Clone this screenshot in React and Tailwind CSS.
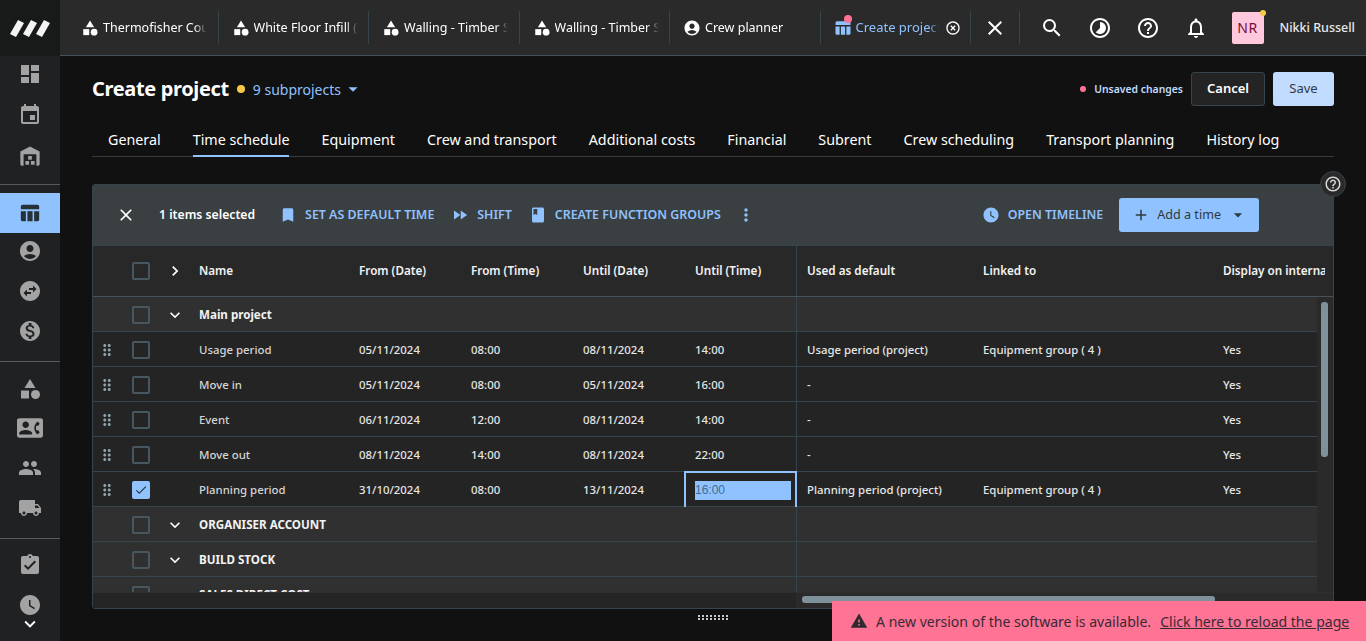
import React from "react";
import {
  MdDashboard, MdEvent, MdAccountCircle, MdSwapHorizontalCircle,
  MdMonetizationOn, MdCategory, MdContactPhone, MdPeople, MdLocalShipping, MdAssignmentTurnedIn,
  MdWatchLater, MdExpandMore, MdChevronRight, MdBookmark, MdFastForward, MdBook, MdMoreVert,
  MdAdd, MdArrowDropDown, MdSearch, MdClose, MdHelpOutline, MdNotificationsNone, MdTimelapse,
  MdHighlightOff, MdWarning, MdDragIndicator, MdCheck,
} from "react-icons/md";

const F = "font-['Noto_Sans',sans-serif]";

function TableIcon({ size = 24 }) {
  return (
    <svg width={size} height={size} viewBox="0 0 24 24" fill="currentColor">
      <path d="M4 3h16a2 2 0 0 1 2 2v3H2V5a2 2 0 0 1 2-2z" />
      <path d="M2 10h5.5v11H4a2 2 0 0 1-2-2z" />
      <rect x="9.2" y="10" width="5.6" height="11" />
      <path d="M16.5 10H22v9a2 2 0 0 1-2 2h-3.5z" />
    </svg>
  );
}

function ShedIcon({ size = 26 }) {
  return (
    <svg width={size} height={size} viewBox="0 0 24 24" fill="currentColor">
      <path d="M12 1.5 22.5 7v14a1.5 1.5 0 0 1-1.5 1.5h-2V10H5v12.5H3A1.5 1.5 0 0 1 1.5 21V7z" />
      <rect x="10" y="12" width="4" height="4" />
      <rect x="7" y="17.5" width="4" height="4" />
      <rect x="13" y="17.5" width="4" height="4" />
    </svg>
  );
}

function SideItem({ Icon, size = 24, active }) {
  return (
    <div className={`flex h-[40px] items-center justify-center ${active ? "bg-[#90c2ff] text-[#263238]" : "text-[#a3a3a3]"}`}>
      <Icon size={size} />
    </div>
  );
}

function Sidebar() {
  return (
    <aside className="relative flex h-full w-[60px] shrink-0 flex-col overflow-hidden bg-[#1f2123]">
      <div className="flex h-[56px] shrink-0 items-center justify-center bg-[#181a1a]">
        <svg width="40" height="17" viewBox="0 0 40 17" fill="#f3f3f3">
          <polygon points="8,0 14,3 6,17 0,14" />
          <polygon points="21,0 27,3 19,17 13,14" />
          <polygon points="34,0 40,3 32,17 26,14" />
        </svg>
      </div>
      <div className="-mt-[2px]">
        <SideItem Icon={MdDashboard} />
        <div className="mt-[1px]"><SideItem Icon={MdEvent} /></div>
        <div className="mt-[1px]"><SideItem Icon={ShedIcon} size={22} /></div>
      </div>
      <div className="mt-[8px] h-px bg-[#5a5a5a]" />
      <div className="mt-[8px]">
        <SideItem Icon={TableIcon} size={22} active />
        <div className="-mt-[2px]"><SideItem Icon={MdAccountCircle} /></div>
        <SideItem Icon={MdSwapHorizontalCircle} />
        <SideItem Icon={MdMonetizationOn} />
      </div>
      <div className="mt-[10px] h-px bg-[#5a5a5a]" />
      <div className="mt-[7px]">
        <SideItem Icon={MdCategory} />
        <div className="-mt-[1px]"><SideItem Icon={MdContactPhone} size={26} /></div>
        <SideItem Icon={MdPeople} />
        <SideItem Icon={MdLocalShipping} />
      </div>
      <div className="mt-[10px] h-px bg-[#5a5a5a]" />
      <div className="mt-[6px]">
        <SideItem Icon={MdAssignmentTurnedIn} />
        <SideItem Icon={MdWatchLater} />
      </div>
      <MdExpandMore size={22} className="absolute bottom-[6px] left-[19px] text-white" />
    </aside>
  );
}

function Tab({ Icon, label, active, dot, close }) {
  return (
    <div className="relative flex h-[33px] w-[150.5px] shrink-0 items-center border-r border-[#36444b] pl-[13px]">
      <span className={`relative flex w-[18px] shrink-0 justify-center ${active ? "text-[#90c2ff]" : "text-white"}`}>
        <Icon size={20} />
        {dot && <span className="absolute -top-[3px] right-[0px] h-[8px] w-[8px] rounded-full bg-[#ff7395]" />}
      </span>
      <span className={`ml-[4px] overflow-hidden whitespace-nowrap pt-[1px] [mask-image:linear-gradient(to_right,black_88%,transparent)] ${active ? "w-[83px] text-[13px] text-[#90c2ff]" : "w-[104px] text-[12.5px] text-white"}`}>
        {label}
      </span>
      {close && <MdHighlightOff size={16} className="ml-[6px] text-white" />}
    </div>
  );
}

function TopBar() {
  return (
    <header className="flex h-[56px] shrink-0 items-center border-b border-[#46525a] bg-[#2a2a2a]">
      <div className="flex items-center pl-[8px]">
        <Tab Icon={MdCategory} label="Thermofisher Council" />
        <Tab Icon={MdCategory} label="White Floor Infill (2024)" />
        <Tab Icon={MdCategory} label="Walling - Timber Stud" />
        <Tab Icon={MdCategory} label="Walling - Timber Stud" />
        <Tab Icon={MdAccountCircle} label="Crew planner" />
        <Tab Icon={TableIcon} label="Create project" active dot close />
        <div className="flex h-[33px] w-[48.5px] items-center justify-center border-r border-[#36444b] text-white">
          <MdClose size={24} />
        </div>
      </div>
      <div className="ml-[20px] flex items-center gap-[24px] text-white">
        <MdSearch size={24} />
        <MdTimelapse size={24} />
        <MdHelpOutline size={24} />
        <MdNotificationsNone size={24} />
      </div>
      <div className="relative ml-[24px] flex h-[32px] w-[32px] items-center justify-center rounded-[2px] bg-[#ffc8dc] text-[14px] tracking-[0.5px] text-[#7a0c3c]">
        NR
        <span className="absolute -right-[2px] -top-[2px] h-[6px] w-[6px] rounded-full bg-[#f9c846]" />
      </div>
      <span className="ml-[16px] whitespace-nowrap pt-[1px] text-[12.5px] font-medium text-[#e8e8e8]">Nikki Russell</span>
    </header>
  );
}

const tabs = ["General", "Time schedule", "Equipment", "Crew and transport", "Additional costs", "Financial", "Subrent", "Crew scheduling", "Transport planning", "History log"];

function TitleBar() {
  return (
    <div className="mt-[16px] flex h-[34px] items-center">
      <h1 className="text-[20px] font-bold tracking-[-0.35px] text-white">Create project</h1>
      <span className="ml-[8px] h-[8px] w-[8px] rounded-full bg-[#f9c846]" />
      <span className="ml-[8px] text-[14px] text-[#90c2ff]">9 subprojects</span>
      <MdArrowDropDown size={22} className="ml-[1px] text-[#90c2ff]" />
      <div className="ml-auto flex items-center">
        <span className="h-[6px] w-[6px] rounded-full bg-[#ff7395]" />
        <span className="ml-[8px] pt-[1px] text-[10.4px] font-semibold text-[#c2dcff]">Unsaved changes</span>
        <button className="ml-[8px] h-[34px] w-[74px] rounded-[3px] border border-[#36444b] bg-[#242424] text-[13px] font-semibold text-white">Cancel</button>
        <button className="ml-[8px] h-[34px] w-[61px] rounded-[3px] bg-[#c2dcff] text-[13px] text-[#2f3a40]">Save</button>
      </div>
    </div>
  );
}

function Tabs() {
  return (
    <nav className="mt-[17px] flex h-[34px] gap-[32px] border-b border-[#3a3a3a] pl-[16px]">
      {tabs.map((t, i) => (
        <div key={t} className={`flex h-[34px] items-center whitespace-nowrap border-b-2 pt-[2px] text-[14.3px] text-white ${i === 1 ? "border-[#90c2ff]" : "border-transparent"}`}>
          {t}
        </div>
      ))}
    </nav>
  );
}

function ToolAction({ Icon, label, size = 18, gap = 8, className = "" }) {
  return (
    <div className={`flex items-center text-[#90c2ff] ${className}`}>
      <Icon size={size} />
      <span className="whitespace-nowrap text-[12.4px] font-semibold" style={{ marginLeft: gap }}>{label}</span>
    </div>
  );
}

function Toolbar() {
  return (
    <div className="flex h-[61px] shrink-0 items-center border-b border-[#36444b] bg-[#3a3f41] pl-[23px]">
      <MdClose size={20} className="text-white" />
      <span className="ml-[23px] whitespace-nowrap text-[12.2px] font-semibold text-white">1 items selected</span>
      <ToolAction Icon={MdBookmark} label="SET AS DEFAULT TIME" className="ml-[24px]" />
      <ToolAction Icon={MdFastForward} label="SHIFT" className="ml-[17px]" />
      <ToolAction Icon={MdBook} label="CREATE FUNCTION GROUPS" className="ml-[17px]" />
      <MdMoreVert size={20} className="ml-[15px] text-[#90c2ff]" />
      <ToolAction Icon={MdWatchLater} label="OPEN TIMELINE" className="ml-[226px]" />
      <button className="ml-[16px] flex h-[34px] w-[140px] items-center rounded-[3px] bg-[#90c2ff] pl-[13px] text-[12.6px] text-[#2f3a40]">
        <MdAdd size={18} />
        <span className="ml-[7px]">Add a time</span>
        <MdArrowDropDown size={20} className="ml-[7px]" />
      </button>
    </div>
  );
}

function Checkbox({ checked }) {
  return checked ? (
    <span className="flex h-[18px] w-[18px] shrink-0 items-center justify-center rounded-[2px] bg-[#90c2ff] text-[#263238]">
      <MdCheck size={14} />
    </span>
  ) : (
    <span className="block h-[18px] w-[18px] shrink-0 rounded-[2px] border-2 border-[#46575f]" />
  );
}

const W = ["w-[160px]", "w-[112px]", "w-[112px]", "w-[112px]", "w-[113px]", "w-[175px]", "w-[240px]", "w-[200px]"];

function Cell({ i, children, className = "" }) {
  return <div className={`flex h-full shrink-0 items-center whitespace-nowrap ${i === 5 ? "pl-[10px]" : "pl-[11px]"} ${W[i]} ${i === 4 ? "border-r border-[#36444b]" : ""} ${className}`}>{children}</div>;
}

function HeaderRow() {
  const cols = ["Name", "From (Date)", "From (Time)", "Until (Date)", "Until (Time)", "Used as default", "Linked to", "Display on internal"];
  return (
    <div className="flex h-[51px] shrink-0 border-b border-[#46525a] bg-[#282828] text-[11.7px] font-semibold text-[#f2f2f2]">
      <div className="flex h-full w-[1232px] overflow-hidden">
        <div className="flex h-full w-[95px] shrink-0 items-center pl-[39px]">
          <Checkbox />
          <MdChevronRight size={20} className="ml-[15px] text-white" />
        </div>
        {cols.map((c, i) => <Cell key={c} i={i}>{c}</Cell>)}
      </div>
    </div>
  );
}

function GroupRow({ label }) {
  return (
    <div className="flex h-[35px] shrink-0 border-b border-[#36444b] bg-[#303030] text-[11.6px] font-bold text-[#f2f2f2]">
      <div className="flex h-full w-[95px] shrink-0 items-center pl-[39px] pt-[2px]">
        <Checkbox />
        <MdExpandMore size={20} className="ml-[15px] text-white" />
      </div>
      <Cell i={0} className="overflow-visible pt-[2px]">{label}</Cell>
      <Cell i={1} /><Cell i={2} /><Cell i={3} /><Cell i={4} />
    </div>
  );
}

function DataRow({ r, selected }) {
  return (
    <div className="flex h-[35px] shrink-0 border-b border-[#36444b] bg-[#242424] text-[11.4px] font-medium text-[#e6e6e6]">
      <div className="flex h-full w-[95px] shrink-0 items-center pt-[2px]">
        <MdDragIndicator size={18} className="ml-[5px] text-[#8fa3ad]" />
        <span className="ml-[16px] block"><Checkbox checked={selected} /></span>
      </div>
      <Cell i={0} className="pt-[2px] text-[#d4d4d4]">{r[0]}</Cell>
      <Cell i={1} className="pt-[2px]">{r[1]}</Cell>
      <Cell i={2} className="pt-[2px]">{r[2]}</Cell>
      <Cell i={3} className="pt-[2px]">{r[3]}</Cell>
      {selected ? (
        <div className="flex h-[36px] w-[113px] shrink-0 -translate-y-px items-center border-x-2 border-t-2 border-[#90c2ff] pl-[9px] pr-[4px]">
          <span className="flex h-[19px] w-full items-center bg-[#90c2ff] font-['Liberation_Sans',sans-serif] text-[12px] font-normal text-[#3f6a94]">{r[4]}</span>
        </div>
      ) : (
        <Cell i={4} className="pt-[2px]">{r[4]}</Cell>
      )}
      <Cell i={5} className="pt-[2px]">{r[5]}</Cell>
      <Cell i={6} className="pt-[2px]">{r[6]}</Cell>
      <Cell i={7} className="pt-[2px]">{r[7]}</Cell>
    </div>
  );
}

const rows = [
  ["Usage period", "05/11/2024", "08:00", "08/11/2024", "14:00", "Usage period (project)", "Equipment group ( 4 )", "Yes"],
  ["Move in", "05/11/2024", "08:00", "05/11/2024", "16:00", "-", "", "Yes"],
  ["Event", "06/11/2024", "12:00", "08/11/2024", "14:00", "-", "", "Yes"],
  ["Move out", "08/11/2024", "14:00", "08/11/2024", "22:00", "-", "", "Yes"],
];

function Table() {
  return (
    <section className="relative mt-[27px] flex h-[425px] flex-col rounded-[3px] border border-[#36444b] bg-[#242424]">
      <Toolbar />
      <HeaderRow />
      <div className="flex min-h-0 flex-1">
        <div className="flex min-w-0 flex-1 flex-col overflow-hidden bg-[#303030]">
          <GroupRow label="Main project" />
          {rows.map((r) => <DataRow key={r[0]} r={r} />)}
          <DataRow selected r={["Planning period", "31/10/2024", "08:00", "13/11/2024", "16:00", "Planning period (project)", "Equipment group ( 4 )", "Yes"]} />
          <GroupRow label="ORGANISER ACCOUNT" />
          <GroupRow label="BUILD STOCK" />
          <GroupRow label="SALES DIRECT COST" />
        </div>
        <div className="w-[16px] shrink-0 bg-[#2a2a2a] pl-[4px] pt-[5px]">
          <div className="h-[155px] w-[7px] rounded-[3px] bg-[#7f929b]" />
        </div>
      </div>
      <div className="flex h-[16px] shrink-0 border-t border-[#2f2f2f]">
        <div className="h-full w-[703px] shrink-0 bg-[#252525]" />
        <div className="h-full flex-1 bg-[#2a2a2a] pl-[6px] pt-[3px]">
          <div className="h-[7px] w-[413px] rounded-[3px] bg-[#7f929b]" />
        </div>
      </div>
      <span className="absolute -right-[13px] -top-[14px] flex h-[26px] w-[26px] items-center justify-center rounded-full border border-[#36444b] bg-[#2a2a2a] text-[#d8d8d8]">
        <MdHelpOutline size={18} />
      </span>
    </section>
  );
}

export default function App() {
  return (
    <div className={`relative flex h-[641px] w-[1366px] overflow-hidden bg-[#111111] ${F}`}>
      <Sidebar />
      <div className="flex min-w-0 flex-1 flex-col">
        <TopBar />
        <main className="flex flex-col pl-[32px] pr-[32px]">
          <TitleBar />
          <Tabs />
          <Table />
          <div className="mt-[6px] flex justify-center">
            <div className="grid grid-cols-[repeat(8,2px)] gap-x-[2px] gap-y-[1px]">
              {Array.from({ length: 16 }).map((_, i) => <span key={i} className="h-[2px] w-[2px] bg-[#c8c8c8]" />)}
            </div>
          </div>
        </main>
      </div>
      <div className="absolute bottom-0 right-0 flex h-[40px] w-[534px] items-center bg-[#ff7395] pl-[18px] text-[14.05px] text-[#3a2a33]">
        <MdWarning size={18} className="text-[#2f2a30]" />
        <span className="ml-[8px] whitespace-nowrap pt-[1px]">A new version of the software is available.</span>
        <a className="ml-[9px] whitespace-nowrap pt-[1px] underline">Click here to reload the page</a>
      </div>
    </div>
  );
}
